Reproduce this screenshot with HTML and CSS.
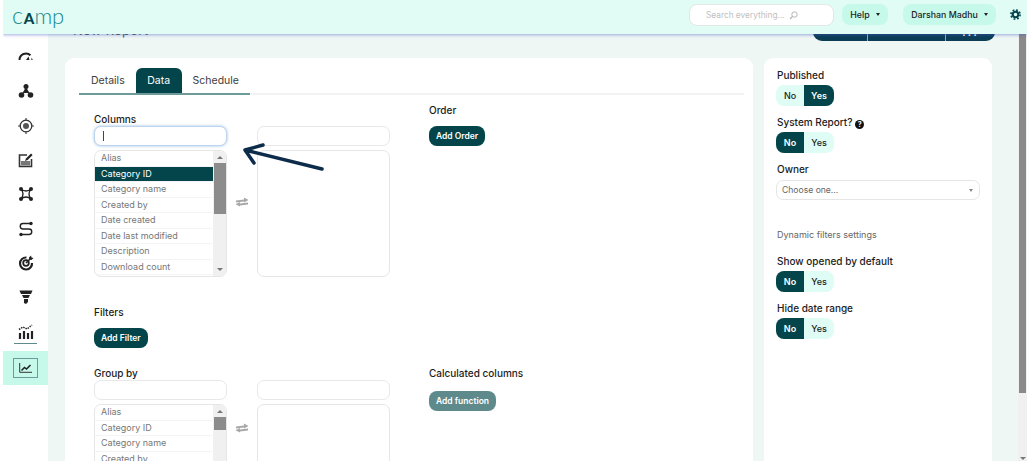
FILE: index.html
```html
<!DOCTYPE html>
<html lang="en">
	<head>
		<meta charset="UTF-8" />
		<meta name="viewport" content="width=device-width, initial-scale=1.0" />
		<title>New Report</title>
		<link rel="stylesheet" href="styles.css">
	</head>
	<body>
		<div class="frame">
			<header class="topbar">
				<div class="logo"><span class="logo-c">c</span><span class="logo-a">A</span><span class="logo-mp">mp</span></div>
				<div class="search">
					<span>Search everything...</span>
					<svg width="9" height="9" viewBox="0 0 9 9"><circle cx="5.5" cy="3.5" r="2.7" fill="none" stroke="#b5b5b5" stroke-width="1"/><path d="M3.5 5.5 1 8" stroke="#b5b5b5" stroke-width="1.2"/></svg>
				</div>
				<div class="top-btn help-btn">Help <i class="caret"></i></div>
				<div class="top-btn user-btn">Darshan Madhu <i class="caret"></i></div>
				<svg class="gear" width="11" height="11" viewBox="0 0 12 12"><circle cx="6" cy="6" r="3" fill="none" stroke="#03454a" stroke-width="2.2"/><circle cx="6" cy="6" r="5" fill="none" stroke="#03454a" stroke-width="1.8" stroke-dasharray="2 1.93"/></svg>
			</header>
			<div class="layout">
				<nav class="sidebar">
					<a class="side-item">
						<svg width="16" height="16" viewBox="0 0 16 16"><path d="M1.500 11A6.500 6.500 0 0 1 12.500 6.300" fill="none" stroke="#222" stroke-width="2"/><path d="M8 11 10.500 7.500 11.500 11zM13.800 8.500l.9 2.500h-1.500z" fill="#222"/></svg>
					</a>
					<a class="side-item">
						<svg width="16" height="16" viewBox="0 0 16 16"><path d="M8 4 4.500 10h7z" fill="#222"/><circle cx="8" cy="3.500" r="2.500" fill="#222"/><circle cx="3.500" cy="12" r="2.800" fill="#222"/><circle cx="12.500" cy="12" r="2.800" fill="#222"/></svg>
					</a>
					<a class="side-item">
						<svg width="16" height="16" viewBox="0 0 16 16"><circle cx="8" cy="8" r="5.800" fill="none" stroke="#333" stroke-width="1.300"/><circle cx="8" cy="8" r="3" fill="#555"/><path d="M8 0v3M8 13v3M0 8h3M13 8h3" stroke="#444" stroke-width="1.200"/></svg>
					</a>
					<a class="side-item">
						<svg width="16" height="16" viewBox="0 0 16 16"><path d="M9 3H1.500v11.500h12V7" fill="none" stroke="#333" stroke-width="1.600"/><rect x="3" y="9" width="9" height="4.500" fill="#777"/><path d="M7 9 8 6.500 13 1.500l1.600 1.600-5 5z" fill="#222"/></svg>
					</a>
					<a class="side-item">
						<svg width="16" height="16" viewBox="0 0 16 16"><path d="M3 3Q8 7 13 3 9 8 13 13 8 9 3 13 7 8 3 3z" fill="none" stroke="#222" stroke-width="1.300"/><circle cx="3" cy="3" r="2" fill="#222"/><circle cx="13" cy="3" r="2" fill="#222"/><circle cx="3" cy="13" r="2" fill="#222"/><circle cx="13" cy="13" r="2" fill="#222"/></svg>
					</a>
					<a class="side-item">
						<svg width="16" height="16" viewBox="0 0 16 16"><path d="M13 2.500H5a2.700 2.700 0 0 0 0 5.500h6a2.700 2.700 0 0 1 0 5.500H3" fill="none" stroke="#222" stroke-width="1.400"/><circle cx="13" cy="2.500" r="1.700" fill="#222"/><circle cx="3" cy="13.500" r="1.700" fill="#222"/></svg>
					</a>
					<a class="side-item">
						<svg width="16" height="16" viewBox="0 0 16 16"><path d="M8.500 2.500A6 6 0 1 0 14 8" fill="none" stroke="#222" stroke-width="2.200"/><circle cx="8" cy="8" r="2.800" fill="none" stroke="#222" stroke-width="1.800"/><path d="M8 8 13 3" stroke="#222" stroke-width="1.600"/><path d="M11 2.500 13 .5l.5 2 2 .5-2 2-2.500-.5z" fill="#222"/></svg>
					</a>
					<a class="side-item">
						<svg width="16" height="16" viewBox="0 0 16 16"><path d="M1.500 1.500h13l-1.500 3.500H3z" fill="#222"/><path d="M4 6h8l-1.500 3h-5z" fill="#222"/><path d="M6 10h4v3l-2 2-2-1z" fill="#222"/></svg>
					</a>
					<a class="side-item side-item-underlined">
						<svg width="16" height="16" viewBox="0 0 16 16"><path d="M2 9v6M6 7v8M10 9v6M14 7v8" stroke="#222" stroke-width="2.200"/><path d="M1 5.500 5 3l4 2 5-4" fill="none" stroke="#222" stroke-width="1.500" stroke-dasharray="1.500 1"/></svg>
					</a>
					<a class="side-item side-item-active">
						<span class="chart-box">
							<svg width="13" height="10" viewBox="0 0 13 10"><path d="M.700 0v9.300H13" fill="none" stroke="#333" stroke-width="1"/><path d="M2.500 7.500 5.500 4.500 7.500 6 11.500 2" fill="none" stroke="#222" stroke-width="1.500"/></svg>
						</span>
					</a>
				</nav>
				<main class="main">
					<div class="page-head">
						<div class="page-title">New Report</div>
						<div class="page-actions">
							<span class="action action-one"></span>
							<span class="action action-two"></span>
							<span class="action action-three">...</span>
						</div>
					</div>
					<div class="cards">
						<section class="card form-card">
							<div class="tabs">
								<div class="tab">Details</div>
								<div class="tab tab-active">Data</div>
								<div class="tab">Schedule</div>
							</div>
							<div class="form-grid">
								<div class="picker picker-first">
									<div class="field-label">Columns</div>
									<div class="dual">
										<div class="dual-col">
											<div class="text-input text-input-focus"><i class="cursor"></i></div>
											<div class="listbox">
												<ul class="list-items">
													<li>Alias</li>
													<li class="selected">Category ID</li>
													<li>Category name</li>
													<li>Created by</li>
													<li>Date created</li>
													<li>Date last modified</li>
													<li>Description</li>
													<li>Download count</li>
												</ul>
												<div class="list-scroll">
													<i class="arrow-up"></i>
													<i class="list-thumb"></i>
													<i class="arrow-down"></i>
												</div>
											</div>
										</div>
										<div class="swap">
											<svg width="14" height="10" viewBox="0 0 14 10"><path d="M1 3.500 9 2.500V.5l4.500 2.500L9 5.500V4.500L1 5.500z" fill="#a8a8a8"/><path d="M13 5.500 5 6.500V5L.5 7.300 5 9.500V8.500l8-1z" fill="#a8a8a8"/></svg>
										</div>
										<div class="dual-col">
											<div class="text-input"></div>
											<div class="listbox"></div>
										</div>
									</div>
								</div>
								<div class="side-block">
									<div class="field-label">Order</div>
									<button class="btn">Add Order</button>
								</div>
								<div class="filters">
									<div class="field-label">Filters</div>
									<button class="btn">Add Filter</button>
								</div>
								<div></div>
								<div class="picker picker-group">
									<div class="field-label">Group by</div>
									<div class="dual">
										<div class="dual-col">
											<div class="text-input"></div>
											<div class="listbox">
												<ul class="list-items">
													<li>Alias</li>
													<li>Category ID</li>
													<li>Category name</li>
													<li>Created by</li>
													<li>Date created</li>
													<li>Date last modified</li>
													<li>Description</li>
													<li>Download count</li>
												</ul>
												<div class="list-scroll">
													<i class="arrow-up"></i>
													<i class="list-thumb list-thumb-small"></i>
												</div>
											</div>
										</div>
										<div class="swap">
											<svg width="14" height="10" viewBox="0 0 14 10"><path d="M1 3.500 9 2.500V.5l4.500 2.500L9 5.500V4.500L1 5.500z" fill="#a8a8a8"/><path d="M13 5.500 5 6.500V5L.5 7.300 5 9.500V8.500l8-1z" fill="#a8a8a8"/></svg>
										</div>
										<div class="dual-col">
											<div class="text-input"></div>
											<div class="listbox"></div>
										</div>
									</div>
								</div>
								<div class="side-block calc-block">
									<div class="field-label">Calculated columns</div>
									<button class="btn btn-muted">Add function</button>
								</div>
							</div>
							<svg class="pointer" width="84" height="28" viewBox="0 0 84 28"><path d="M81 26 4 7M22 2 4 7l9 13" fill="none" stroke="#0d2c4a" stroke-width="3.500" stroke-linecap="round" stroke-linejoin="round"/></svg>
						</section>
						<aside class="card settings-card">
							<div class="field-label">Published</div>
							<div class="toggle"><span>No</span><span class="on">Yes</span></div>
							<div class="field-label">System Report? <i class="hint">?</i></div>
							<div class="toggle"><span class="on">No</span><span>Yes</span></div>
							<div class="field-label">Owner</div>
							<div class="select">Choose one...<i class="caret caret-grey"></i></div>
							<div class="settings-note">Dynamic filters settings</div>
							<div class="field-label">Show opened by default</div>
							<div class="toggle"><span class="on">No</span><span>Yes</span></div>
							<div class="field-label">Hide date range</div>
							<div class="toggle"><span class="on">No</span><span>Yes</span></div>
						</aside>
					</div>
				</main>
				<div class="page-scroll">
					<i class="page-thumb"></i>
					<i class="arrow-down"></i>
				</div>
			</div>
		</div>
	</body>
</html>
```

FILE: styles.css
```css
* {
	margin: 0;
	padding: 0;
	box-sizing: border-box;
}

body {
	font-family: "Inter", "Liberation Sans", sans-serif;
	background-color: #fff;
	color: #1c1c1c;
}

.frame {
	margin-left: 3px;
	width: 1024px;
	height: 461px;
	overflow: hidden;
	display: flex;
	flex-direction: column;
}

/* top bar */
.topbar {
	position: relative;
	z-index: 10;
	flex: none;
	height: 34px;
	background-color: #e0fcf5;
	box-shadow: 0 1px 3px rgba(70, 90, 200, 0.5);
	display: flex;
	align-items: flex-start;
	padding-top: 4px;
}

.logo {
	width: 686px;
	padding-left: 9px;
	height: 26px;
	font-family: "Lato", sans-serif;
	font-size: 22px;
	line-height: 22px;
	color: #17898f;
	font-weight: 300;
	white-space: nowrap;
}

.logo-c {
	font-size: 23px;
	margin-right: 1px;
}

.logo-a {
	font-size: 15px;
	font-weight: 900;
	color: #03454a;
}

.search {
	width: 145px;
	height: 22px;
	background-color: #fff;
	border: 1px solid #e3e8e6;
	border-radius: 8px;
	font-size: 8.300px;
	color: #c0c0c0;
	display: flex;
	align-items: center;
	gap: 4px;
	padding-left: 16px;
}

.top-btn {
	height: 21px;
	background-color: #c6f9ea;
	border-radius: 8px;
	font-size: 8.800px;
	font-weight: 500;
	display: flex;
	align-items: center;
	justify-content: center;
	gap: 6px;
	color: #222;
}

.help-btn {
	width: 46px;
	margin-left: 8px;
}

.user-btn {
	width: 93px;
	margin-left: 15px;
}

.caret {
	width: 0;
	height: 0;
	border-left: 2.5px solid transparent;
	border-right: 2.5px solid transparent;
	border-top: 3px solid #222;
}

.caret-grey {
	border-top-color: #888;
}

.gear {
	margin-left: 14px;
	margin-top: 5px;
}

/* layout */
.layout {
	flex: 1;
	min-height: 0;
	display: flex;
}

.sidebar {
	flex: none;
	width: 45px;
	background-color: #fff;
	padding-top: 6px;
}

.side-item {
	height: 34.3px;
	display: flex;
	align-items: center;
	justify-content: center;
}

.side-item-underlined {
	position: relative;
}

.side-item-underlined::after {
	content: "";
	position: absolute;
	left: 11px;
	right: 11px;
	bottom: 5px;
	height: 1px;
	background-color: #5f8a8c;
}

.side-item-active {
	margin-top: 2px;
	height: 34px;
	background-color: #c6f9ea;
}

.chart-box {
	width: 25px;
	height: 20px;
	border: 1px solid #6f9a9a;
	display: flex;
	align-items: center;
	justify-content: center;
}

.main {
	flex: 1;
	min-width: 0;
	background-color: #eef7f4;
	overflow: hidden;
	padding-left: 17px;
}

.page-head {
	height: 19px;
	margin-top: -12px;
	display: flex;
	justify-content: space-between;
	align-items: flex-end;
	padding-right: 23px;
}

.page-title {
	margin-left: 8px;
	margin-bottom: 3px;
	font-size: 13px;
	line-height: 16px;
	letter-spacing: 0.3px;
	color: #555;
}

.page-actions {
	display: flex;
	height: 19px;
	background-color: #0b3d55;
	border-radius: 0 0 9px 9px;
	color: #fff;
	font-size: 10px;
}

.action {
	display: block;
	text-align: center;
	line-height: 20px;
	border-left: 1px solid #8fb0b8;
}

.action:first-child {
	border-left: none;
}

.action-one {
	width: 54px;
}

.action-two {
	width: 78px;
}

.action-three {
	width: 50px;
	font-size: 13px;
	line-height: 19px;
	letter-spacing: 2px;
}

.cards {
	display: flex;
	align-items: flex-start;
	gap: 11px;
	margin-top: 17px;
}

.card {
	background-color: #fff;
	border-radius: 9px;
}

.form-card {
	position: relative;
	width: 688px;
	min-height: 420px;
	padding: 10px 9px 0 14px;
}

.settings-card {
	width: 228px;
	min-height: 420px;
	padding: 10px 12px;
}

/* tabs */
.tabs {
	display: flex;
	height: 27px;
	border-bottom: 2px solid #f2f4f3;
	font-size: 10.500px;
}

.tab {
	height: 27px;
	line-height: 26px;
	padding: 0 11px;
	color: #3d3d3d;
	border-bottom: 2px solid #6f9a9a;
}

.tab:first-child {
	padding-left: 12px;
}

.tab-active {
	background-color: #03454a;
	color: #fff;
	border-radius: 6px 6px 0 0;
	padding: 0 11.500px;
}

/* form */
.form-grid {
	display: grid;
	grid-template-columns: 335px 1fr;
	padding: 8px 0 0 15px;
}

.field-label {
	font-size: 10px;
	line-height: 14px;
	font-weight: 500;
	color: #1c1c1c;
}

.picker-first {
	padding-top: 9px;
}

.picker-group {
	margin-top: 18px;
}

.dual {
	display: flex;
}

.dual-col {
	width: 133px;
	flex: none;
	display: flex;
	flex-direction: column;
	gap: 4px;
}

.swap {
	width: 30px;
	flex: none;
	display: flex;
	justify-content: center;
	padding-top: 71px;
}

.picker-group .swap {
	padding-top: 43px;
}

.text-input {
	height: 20px;
	background-color: #fff;
	border: 1px solid #e8e8e8;
	border-radius: 7px;
	display: flex;
	align-items: center;
	padding-left: 8px;
}

.text-input-focus {
	border-color: #bcd4ec;
	box-shadow: 0 0 3px rgba(90, 150, 220, 0.6);
}

.cursor {
	width: 1px;
	height: 10px;
	background-color: #444;
}

.listbox {
	height: 127px;
	border: 1px solid #e6e6e6;
	border-radius: 7px;
	overflow: hidden;
	display: flex;
}

.list-items {
	flex: 1;
	list-style: none;
	font-size: 9px;
	color: #777;
}

.list-items li {
	height: 15.500px;
	line-height: 14px;
	padding-left: 6px;
	border-bottom: 1px solid #f4f4f4;
	white-space: nowrap;
}

.list-items .selected {
	background-color: #03454a;
	color: #fff;
}

.list-scroll {
	width: 13px;
	flex: none;
	background-color: #f0f0f0;
	display: flex;
	flex-direction: column;
	align-items: center;
	height: 100%;
}

.arrow-up {
	flex: none;
	margin-top: 5px;
	width: 0;
	height: 0;
	border-left: 3px solid transparent;
	border-right: 3px solid transparent;
	border-bottom: 3px solid #777;
}

.arrow-down {
	flex: none;
	width: 0;
	height: 0;
	border-left: 3px solid transparent;
	border-right: 3px solid transparent;
	border-top: 3px solid #777;
}

.list-thumb {
	flex: none;
	width: 12px;
	height: 51px;
	margin-top: 4px;
	background-color: #8c8c8c;
}

.list-thumb-small {
	height: 13px;
}

.list-scroll .arrow-down {
	margin-top: auto;
	margin-bottom: 5px;
}

.side-block .btn {
	margin-top: 9px;
}

.filters {
	margin-top: 28px;
}

.filters .btn {
	margin-top: 9px;
}

.calc-block {
	margin-top: 18px;
}

.calc-block .btn {
	margin-top: 11px;
}

.btn {
	display: block;
	height: 20px;
	padding: 0 7px;
	background-color: #03454a;
	color: #fff;
	border: none;
	border-radius: 8px;
	font-family: inherit;
	font-size: 8.500px;
	font-weight: 600;
}

.btn-muted {
	background-color: #5f8a8c;
}

/* settings */
.settings-card .field-label {
	padding-left: 1px;
}

.toggle {
	display: flex;
	width: 58px;
	height: 21px;
	margin: 3px 0 9px;
	background-color: #dffcf5;
	border-radius: 8px;
	overflow: hidden;
	font-size: 9px;
	font-weight: 500;
	line-height: 21px;
	text-align: center;
}

.toggle span {
	width: 30px;
}

.toggle span:first-child {
	width: 28px;
}

.toggle .on {
	background-color: #03454a;
	color: #fff;
	font-weight: 600;
}

.hint {
	display: inline-block;
	width: 9px;
	height: 9px;
	border-radius: 50%;
	background-color: #111;
	color: #fff;
	font-size: 7px;
	font-style: normal;
	font-weight: 700;
	line-height: 9px;
	text-align: center;
	vertical-align: -1px;
}

.select {
	height: 20px;
	margin-top: 4px;
	border: 1px solid #e6e6e6;
	border-radius: 7px;
	font-size: 8.600px;
	color: #666;
	display: flex;
	align-items: center;
	justify-content: space-between;
	padding: 0 6px 0 5px;
}

.settings-note {
	margin-top: 28px;
	margin-bottom: 12px;
	padding-left: 1px;
	font-size: 9px;
	line-height: 14px;
	color: #666;
}

.pointer {
	position: absolute;
	left: 176px;
	top: 85px;
}

/* page scrollbar */
.page-scroll {
	flex: none;
	width: 9px;
	background-color: #f0f0f0;
	display: flex;
	flex-direction: column;
	align-items: center;
}

.page-thumb {
	width: 7px;
	height: 359px;
	background-color: #8a8a8a;
}

.page-scroll .arrow-down {
	margin-top: auto;
	margin-bottom: 1px;
}
```
